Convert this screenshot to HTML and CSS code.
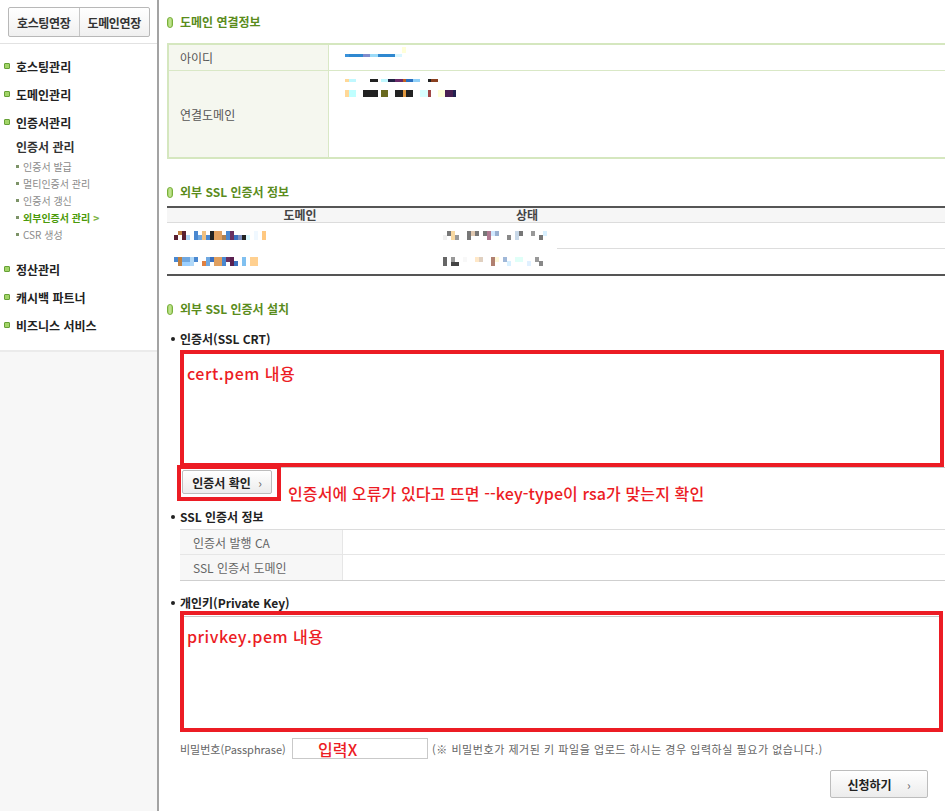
FILE: index.html
```html
<!DOCTYPE html>
<html lang="ko">
<head>
<meta charset="utf-8">
<title>외부 SSL 인증서 설치</title>
<link rel="stylesheet" href="styles.css">
</head>
<body>
<div class="page">
  <aside class="side">
    <div class="side-top">
      <div class="ext-btns">
        <button class="ext">호스팅연장</button>
        <button class="ext">도메인연장</button>
      </div>
    </div>
    <nav class="menu">
      <div class="m-item"><i class="sq"></i>호스팅관리</div>
      <div class="m-item"><i class="sq"></i>도메인관리</div>
      <div class="m-item"><i class="sq"></i>인증서관리</div>
      <div class="sub-head">인증서 관리</div>
      <ul class="sub">
        <li>인증서 발급</li>
        <li>멀티인증서 관리</li>
        <li>인증서 갱신</li>
        <li class="on">외부인증서 관리 <b class="arr">&gt;</b></li>
        <li>CSR 생성</li>
      </ul>
      <div class="m-item gap"><i class="sq"></i>정산관리</div>
      <div class="m-item"><i class="sq"></i>캐시백 파트너</div>
      <div class="m-item"><i class="sq"></i>비즈니스 서비스</div>
    </nav>
    <div class="side-rest"></div>
  </aside>

  <main class="main">
    <h3 class="tit first"><i class="pill"></i>도메인 연결정보</h3>
    <table class="info">
      <tr class="r1">
        <th>아이디</th>
        <td>
          <svg class="blur b1" width="64" height="11" viewBox="0 0 64 11">
            <rect x="57" y="0" width="4" height="6" fill="#ffffd8"/>
            <rect x="0" y="7" width="4" height="3" fill="#3a92da"/>
            <rect x="4" y="7" width="14" height="3" fill="#2f88d0"/>
            <rect x="18" y="7" width="7" height="3" fill="#7f8ccc"/>
            <rect x="25" y="7" width="8" height="3" fill="#9adaf8"/>
            <rect x="33" y="7" width="17" height="3" fill="#2f88d0"/>
            <rect x="50" y="7" width="7" height="3" fill="#d8f6ff"/>
          </svg>
        </td>
      </tr>
      <tr class="r2">
        <th>연결도메인</th>
        <td class="top">
          <svg class="blur b2" width="115" height="20" viewBox="0 0 115 20">
            <rect x="0" y="1" width="4" height="3" fill="#ffd898"/>
            <rect x="4" y="1" width="7" height="3" fill="#c0f8ff"/>
            <rect x="25" y="1" width="8" height="3" fill="#222"/>
            <rect x="36" y="1" width="7" height="3" fill="#c0f8ff"/>
            <rect x="43" y="1" width="7" height="3" fill="#222244"/>
            <rect x="50" y="1" width="8" height="3" fill="#6a2a6a"/>
            <rect x="58" y="1" width="3" height="3" fill="#c06020"/>
            <rect x="61" y="1" width="7" height="3" fill="#2a70c0"/>
            <rect x="68" y="1" width="7" height="3" fill="#90d0f8"/>
            <rect x="83" y="1" width="3" height="3" fill="#222"/>
            <rect x="86" y="1" width="7" height="3" fill="#8a4020"/>
            <rect x="0" y="12" width="4" height="7" fill="#ffd898"/>
            <rect x="4" y="12" width="7" height="7" fill="#c0ffff"/>
            <rect x="18" y="12" width="15" height="7" fill="#222"/>
            <rect x="36" y="12" width="7" height="7" fill="#6a6a20"/>
            <rect x="50" y="12" width="8" height="7" fill="#222"/>
            <rect x="58" y="12" width="3" height="7" fill="#e09840"/>
            <rect x="61" y="12" width="7" height="7" fill="#222"/>
            <rect x="75" y="12" width="8" height="7" fill="#d8ffff"/>
            <rect x="83" y="12" width="3" height="7" fill="#a04848"/>
            <rect x="93" y="12" width="7" height="7" fill="#ffffd8"/>
            <rect x="100" y="12" width="8" height="7" fill="#4a2050"/>
            <rect x="108" y="12" width="3" height="7" fill="#222250"/>
          </svg>
        </td>
      </tr>
    </table>

    <h3 class="tit sec"><i class="pill"></i>외부 SSL 인증서 정보</h3>
    <table class="list">
      <colgroup>
        <col class="w1">
        <col class="w2">
        <col class="w3">
        <col>
      </colgroup>
      <thead>
        <tr>
          <th>도메인</th>
          <th colspan="2">상태</th>
          <th></th>
        </tr>
      </thead>
      <tbody>
        <tr class="lr1">
          <td class="dom">
            <svg class="blur" width="96" height="10" viewBox="0 0 96 10">
              <rect x="0" y="4" width="4" height="5" fill="#5a2030"/>
              <rect x="4" y="0" width="4" height="4" fill="#c08040"/>
              <rect x="8" y="0" width="4" height="9" fill="#5a2030"/>
              <rect x="12" y="4" width="4" height="5" fill="#b0d8f8"/>
              <rect x="20" y="0" width="4" height="9" fill="#4a88d0"/>
              <rect x="24" y="4" width="4" height="5" fill="#70a8e0"/>
              <rect x="28" y="0" width="4" height="9" fill="#f0c080"/>
              <rect x="32" y="4" width="4" height="5" fill="#4a88d0"/>
              <rect x="36" y="0" width="4" height="9" fill="#222"/>
              <rect x="40" y="0" width="8" height="9" fill="#e0a060"/>
              <rect x="48" y="4" width="4" height="5" fill="#b08050"/>
              <rect x="52" y="0" width="4" height="9" fill="#4a88d0"/>
              <rect x="56" y="0" width="4" height="9" fill="#6a3060"/>
              <rect x="60" y="4" width="4" height="5" fill="#3a70c0"/>
              <rect x="64" y="4" width="4" height="5" fill="#8090c0"/>
              <rect x="68" y="4" width="4" height="5" fill="#222"/>
              <rect x="72" y="4" width="4" height="5" fill="#d8f8ff"/>
              <rect x="80" y="0" width="4" height="9" fill="#f0f8ff"/>
              <rect x="88" y="0" width="4" height="9" fill="#ffc880"/>
            </svg>
          </td>
          <td class="st">
            <svg class="blur" width="104" height="10" viewBox="0 0 104 10">
              <rect x="0" y="4" width="4" height="5" fill="#f0f0f0"/>
              <rect x="4" y="0" width="4" height="5" fill="#777"/>
              <rect x="8" y="0" width="4" height="9" fill="#f8d8a0"/>
              <rect x="12" y="4" width="4" height="5" fill="#999"/>
              <rect x="24" y="0" width="4" height="9" fill="#777"/>
              <rect x="28" y="0" width="4" height="5" fill="#e0c8b0"/>
              <rect x="32" y="0" width="4" height="5" fill="#777"/>
              <rect x="40" y="0" width="4" height="5" fill="#777"/>
              <rect x="44" y="0" width="4" height="9" fill="#b07890"/>
              <rect x="48" y="0" width="4" height="5" fill="#d0e8ff"/>
              <rect x="52" y="0" width="4" height="5" fill="#9ab0d0"/>
              <rect x="64" y="4" width="4" height="5" fill="#888"/>
              <rect x="72" y="0" width="4" height="9" fill="#c8d8e8"/>
              <rect x="76" y="0" width="4" height="5" fill="#777"/>
              <rect x="88" y="0" width="4" height="5" fill="#999"/>
              <rect x="96" y="4" width="4" height="5" fill="#777"/>
              <rect x="100" y="0" width="4" height="5" fill="#d8f0ff"/>
            </svg>
          </td>
          <td class="ln"></td>
          <td class="ln"></td>
        </tr>
        <tr class="lr2">
          <td class="dom">
            <svg class="blur" width="96" height="10" viewBox="0 0 96 10">
              <rect x="0" y="0" width="4" height="5" fill="#4a88d0"/>
              <rect x="4" y="0" width="4" height="9" fill="#c08040"/>
              <rect x="8" y="0" width="8" height="5" fill="#70a8e0"/>
              <rect x="8" y="5" width="8" height="4" fill="#9cd0ff"/>
              <rect x="16" y="0" width="4" height="9" fill="#b0d8f8"/>
              <rect x="20" y="0" width="4" height="5" fill="#4a88d0"/>
              <rect x="28" y="4" width="4" height="5" fill="#e08040"/>
              <rect x="32" y="0" width="4" height="9" fill="#70a8e0"/>
              <rect x="36" y="0" width="4" height="5" fill="#3a70c0"/>
              <rect x="40" y="0" width="8" height="9" fill="#e0a060"/>
              <rect x="48" y="0" width="4" height="9" fill="#4a88d0"/>
              <rect x="52" y="0" width="4" height="5" fill="#6a3060"/>
              <rect x="56" y="0" width="4" height="9" fill="#5a2050"/>
              <rect x="60" y="4" width="4" height="5" fill="#3a70c0"/>
              <rect x="68" y="0" width="4" height="9" fill="#80c0f0"/>
              <rect x="76" y="0" width="8" height="9" fill="#ffd090"/>
            </svg>
          </td>
          <td class="st">
            <svg class="blur" width="104" height="10" viewBox="0 0 104 10">
              <rect x="0" y="0" width="4" height="9" fill="#666"/>
              <rect x="8" y="0" width="4" height="5" fill="#999"/>
              <rect x="8" y="5" width="8" height="4" fill="#444"/>
              <rect x="20" y="0" width="4" height="5" fill="#f8f8f8"/>
              <rect x="32" y="0" width="4" height="5" fill="#ffe8c8"/>
              <rect x="36" y="0" width="4" height="5" fill="#e0d0c0"/>
              <rect x="48" y="0" width="4" height="9" fill="#b08070"/>
              <rect x="52" y="0" width="4" height="5" fill="#fff8d8"/>
              <rect x="60" y="0" width="4" height="5" fill="#a0b8d8"/>
              <rect x="64" y="4" width="4" height="5" fill="#d8f0ff"/>
              <rect x="72" y="0" width="8" height="5" fill="#e0fff8"/>
              <rect x="84" y="4" width="4" height="5" fill="#e0f0ff"/>
              <rect x="92" y="0" width="4" height="5" fill="#999"/>
              <rect x="96" y="4" width="4" height="5" fill="#888"/>
            </svg>
          </td>
          <td></td>
          <td></td>
        </tr>
      </tbody>
    </table>

    <h3 class="tit sec"><i class="pill"></i>외부 SSL 인증서 설치</h3>

    <div class="blt first-blt">인증서(SSL CRT)</div>
    <div class="crt-wrap">
      <div class="mark crt">
        <div class="note big">cert.pem 내용</div>
      </div>
    </div>
    <div class="check-row">
      <div class="mark small">
        <button class="btn chk">인증서 확인 <span class="gt">›</span></button>
      </div>
      <p class="note hint">인증서에 오류가 있다고 뜨면 --key-type이 rsa가 맞는지 확인</p>
    </div>

    <div class="blt ssl-blt">SSL 인증서 정보</div>
    <table class="sslinfo">
      <tr><th>인증서 발행 CA</th><td></td></tr>
      <tr><th>SSL 인증서 도메인</th><td></td></tr>
    </table>

    <div class="blt key-blt">개인키(Private Key)</div>
    <div class="mark key">
      <div class="inner">
        <div class="note big">privkey.pem 내용</div>
      </div>
    </div>

    <div class="pass-row">
      <label class="pass-lbl">비밀번호(Passphrase)</label>
      <div class="pass-input"><span class="note">입력X</span></div>
      <span class="pass-note">(※ 비밀번호가 제거된 키 파일을 업로드 하시는 경우 입력하실 필요가 없습니다.)</span>
    </div>

    <div class="submit-row">
      <button class="btn submit">신청하기 <span class="gt">›</span></button>
    </div>
  </main>
</div>
</body>
</html>
```
FILE: styles.css
```css
html, body {
  margin: 0;
  padding: 0;
  overflow: hidden;
  background: #fff;
}
body {
  font-family: "Noto Sans CJK KR", "Noto Sans", sans-serif;
  font-size: 12px;
  color: #333;
}
.page {
  display: flex;
  min-height: 811px;
}

/* ---------- sidebar ---------- */
.side {
  width: 157px;
  flex-shrink: 0;
  border-right: 2px solid #a3a3a3;
  display: flex;
  flex-direction: column;
}
.side-top {
  padding: 7px 0 6px 8px;
  border-bottom: 1px solid #e2e2e2;
}
.ext-btns {
  display: flex;
  width: 142px;
  height: 30px;
  box-sizing: border-box;
  border: 1px solid #b8b8b8;
  border-radius: 2px;
  background: linear-gradient(#ffffff, #f0f0f0);
}
.ext {
  flex: 1;
  border: 0;
  padding: 0;
  background: transparent;
  font: bold 12px "Noto Sans CJK KR", sans-serif;
  color: #333;
  letter-spacing: -0.3px;
}
.ext + .ext {
  border-left: 1px solid #c6c6c6;
}
.menu {
  padding: 8px 0 11px;
  border-bottom: 2px solid #ebebeb;
}
.m-item {
  height: 28px;
  display: flex;
  align-items: center;
  padding-left: 4px;
  font-weight: bold;
  font-size: 12px;
  color: #222;
}
.m-item.gap {
  margin-top: 12px;
}
.sq {
  width: 6px;
  height: 6px;
  box-sizing: border-box;
  border: 1px solid #66a036;
  background: #a2d468;
  border-radius: 1px;
  margin-right: 6px;
}
.sub-head {
  margin-top: 3px;
  padding-left: 16px;
  line-height: 16px;
  font-weight: bold;
  color: #333;
}
.sub {
  list-style: none;
  margin: 3px 0 0;
  padding: 0 0 0 16px;
}
.sub li {
  line-height: 17px;
  font-size: 10px;
  color: #8a8a8a;
  display: flex;
  align-items: center;
}
.sub li::before {
  content: "";
  width: 3px;
  height: 3px;
  background: #7d9368;
  margin-right: 4px;
}
.sub li.on {
  color: #4b9a0a;
  font-weight: bold;
}
.arr {
  margin-left: 3px;
  font-size: 10px;
  color: #7cb342;
}
.side-rest {
  flex: 1;
  background: #f7f7f7;
}

/* ---------- main ---------- */
.main {
  width: 780px;
  flex-shrink: 0;
  padding: 14px 0 0 8px;
}
.tit {
  margin: 0;
  height: 16px;
  line-height: 16px;
  display: flex;
  align-items: center;
  font-size: 12px;
  font-weight: bold;
  color: #5a8c1c;
}
.tit.sec {
  margin-top: 25px;
}
.pill {
  width: 6px;
  height: 11px;
  box-sizing: border-box;
  border: 1px solid #79b03c;
  border-radius: 3px;
  background: linear-gradient(90deg, #9fd061, #c8e89c 50%, #9fd061);
  margin-right: 7px;
}

table {
  border-spacing: 0;
  border-collapse: separate;
}
.info {
  width: 100%;
  margin-top: 13px;
  border: 2px solid #d5e7bf;
  border-right: 0;
}
.info th,
.info td {
  padding: 0;
}
.info th {
  width: 160px;
  background: #f5f7ef;
  text-align: left;
  padding-left: 11px;
  box-sizing: border-box;
  font-weight: normal;
  color: #555;
  border-right: 1px solid #d9e8c6;
}
.info .r1 th,
.info .r1 td {
  height: 25px;
  border-bottom: 1px solid #d9e8c6;
}
.info .r2 th,
.info .r2 td {
  height: 86px;
}
.info td {
  padding-left: 16px;
  vertical-align: top;
}
.blur {
  display: block;
}
.b1 {
  margin-top: 2px;
}
.b2 {
  margin-top: 7px;
}

.list {
  width: 100%;
  table-layout: fixed;
  margin-top: 6px;
  border-top: 2px solid #555;
  border-bottom: 2px solid #555;
}
.list .w1 { width: 266px; }
.list .w2 { width: 124px; }
.list .w3 { width: 64px; }
.list th {
  height: 14px;
  padding: 0;
  line-height: 14px;
  background: #f6f6f6;
  border-bottom: 1px solid #dcdcdc;
  font-weight: bold;
  color: #444;
  font-size: 12px;
}
.list td {
  padding: 0;
  vertical-align: middle;
}
.list td.dom { padding-left: 7px; }
.list td.st { padding-left: 10px; }
.list .lr1 td { height: 26px; }
.list .lr2 td { height: 25px; }
.list td.ln {
  height: 25px;
  border-bottom: 1px solid #dddddd;
}

/* bullets */
.blt {
  height: 16px;
  line-height: 16px;
  display: flex;
  align-items: center;
  margin-left: 4px;
  font-weight: bold;
  font-size: 12px;
  color: #222;
}
.blt::before {
  content: "";
  width: 4px;
  height: 4px;
  border-radius: 50%;
  background: #222;
  margin-right: 5px;
}
.first-blt { margin-top: 14px; }
.ssl-blt { margin-top: 8px; }
.key-blt { margin-top: 14px; }

/* annotation marks */
.mark {
  border: 4px solid #ec1c24;
  box-sizing: border-box;
}
.note {
  font-size: 16px;
  line-height: 20px;
  font-weight: 500;
  color: #ec1c24;
  letter-spacing: 0.1px;
}
.note.big {
  letter-spacing: 0.5px;
}
.crt-wrap {
  margin: 3px 0 0 13px;
  border-bottom: 1px solid #c8c8c8;
}
.crt {
  width: 764px;
  height: 117px;
  padding: 9px 3px;
}
.check-row {
  margin: -3px 0 0 10px;
  display: flex;
  align-items: flex-end;
  position: relative;
}
.mark.small {
  width: 104px;
  height: 36px;
  padding: 1px 0 0 1px;
  background: #fff;
}
.btn {
  font: bold 12px "Noto Sans CJK KR", sans-serif;
  color: #222;
  border: 1px solid #bdbdbd;
  border-radius: 2px;
  background: linear-gradient(#ffffff, #ececec);
  padding: 0;
}
.gt {
  font-weight: normal;
  color: #666;
  margin-left: 4px;
}
.chk {
  width: 90px;
  height: 24px;
}
.hint {
  margin: 0 0 -2px 7px;
}

.sslinfo {
  margin: 4px 0 0 13px;
  width: 765px;
  border-top: 1px solid #dcdcdc;
  border-bottom: 1px solid #cfcfcf;
}
.sslinfo th,
.sslinfo td {
  height: 25px;
  padding: 0;
}
.sslinfo tr:first-child th,
.sslinfo tr:first-child td {
  height: 24px;
  border-bottom: 1px solid #e6e6e6;
}
.sslinfo th {
  width: 163px;
  box-sizing: border-box;
  text-align: left;
  padding-left: 13px;
  background: #f7f7f7;
  border-right: 1px solid #e6e6e6;
  font-weight: normal;
  color: #666;
}

.mark.key {
  margin-left: 13px;
  width: 763px;
  height: 121px;
}
.key .inner {
  margin-top: 1px;
  border-top: 1px solid #c8c8c8;
  padding: 9px 3px;
}

.pass-row {
  margin: 6px 0 0 13px;
  display: flex;
  align-items: center;
  height: 21px;
}
.pass-lbl {
  width: 112px;
  font-size: 11px;
  color: #666;
}
.pass-input {
  width: 136px;
  height: 21px;
  box-sizing: border-box;
  border: 1px solid #c9c9c9;
  padding-left: 25px;
  display: flex;
  align-items: center;
}
.pass-note {
  margin-left: 4px;
  font-size: 11px;
  color: #666;
  letter-spacing: 0.55px;
}

.submit-row {
  width: 761px;
  display: flex;
  justify-content: flex-end;
  margin-top: 11px;
}
.submit {
  width: 98px;
  height: 28px;
}
.submit .gt {
  margin-left: 12px;
}
```
